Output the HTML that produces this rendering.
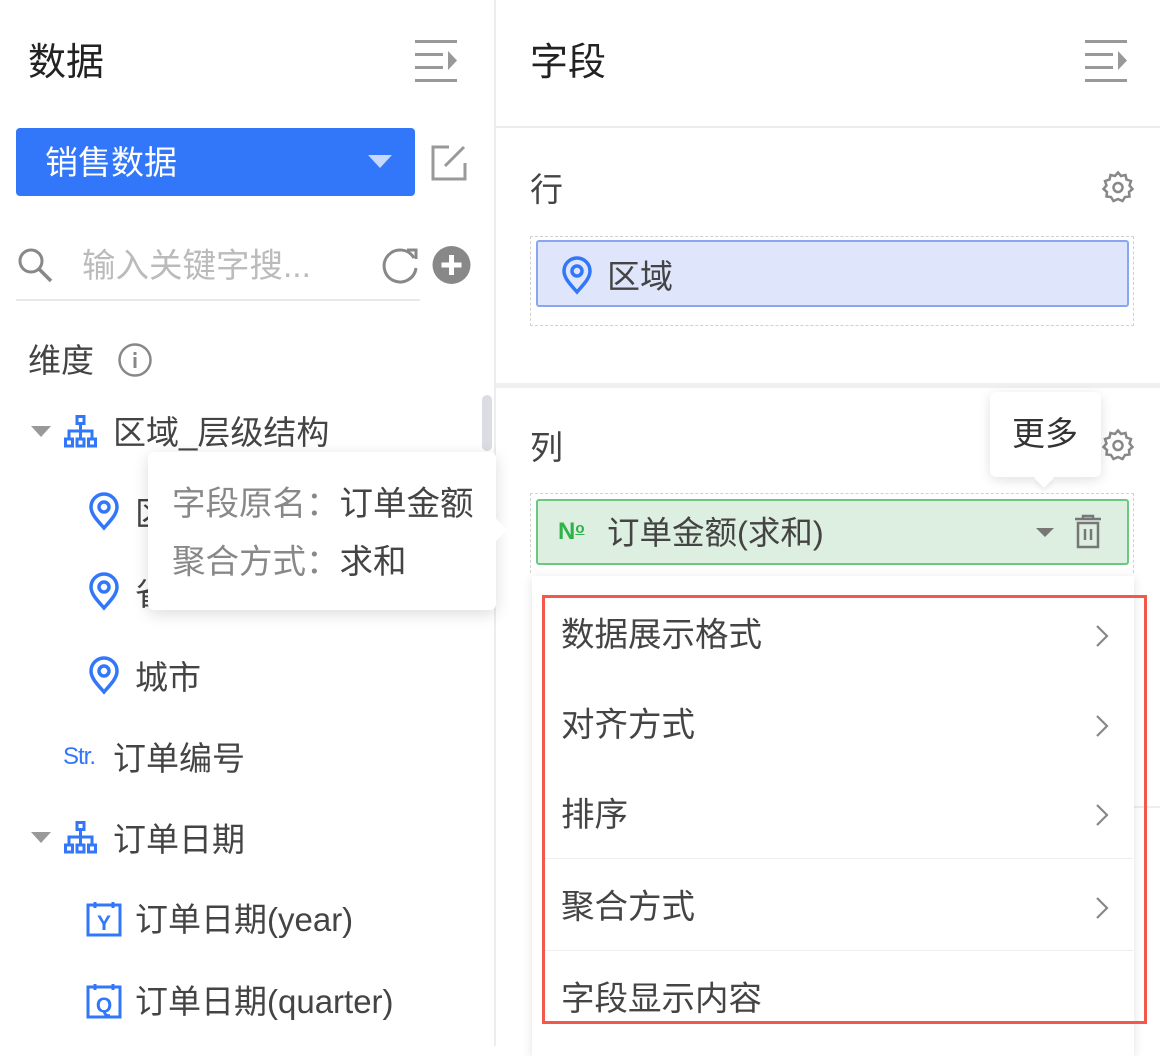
<!DOCTYPE html>
<html><head><meta charset="utf-8">
<style>
*{margin:0;padding:0;box-sizing:border-box}
body{width:1160px;height:1046px;overflow:hidden;background:#fff;position:relative;font-family:"Liberation Sans","Noto Sans CJK SC",sans-serif;color:#333}
.a{position:absolute}
.t{position:absolute;line-height:1;white-space:nowrap}
svg{position:absolute;overflow:visible}
</style></head><body>
<div class="a" style="left:494px;top:0;width:2px;height:1046px;background:#ededed"></div>
<div class="t" style="left:28px;top:44px;font-size:38px;color:#222">数据</div>
<svg style="left:415px;top:40px" width="44" height="44"><g fill="#999"><rect x="0" y="0" width="42" height="3"/><rect x="0" y="13" width="28" height="3"/><rect x="0" y="26" width="28" height="3"/><rect x="0" y="39" width="42" height="3"/><path d="M33 11 L42 20.5 L33 30Z"/></g></svg>
<div class="a" style="left:16px;top:128px;width:399px;height:68px;background:#3277f9;border-radius:4px"></div>
<div class="t" style="left:45px;top:146px;font-size:33px;color:#fff">销售数据</div>
<svg style="left:368px;top:155px" width="24" height="14"><path d="M0 0H24L12 13Z" fill="#c6d8fd"/></svg>
<svg style="left:431px;top:145px" width="36" height="36"><path d="M18 2H2V34H34V18" fill="none" stroke="#999" stroke-width="3"/><path d="M33 2L14 21" stroke="#999" stroke-width="3"/></svg>
<svg style="left:18px;top:248px" width="36" height="36"><circle cx="13" cy="13" r="11" fill="none" stroke="#888" stroke-width="3"/><path d="M21 21L33 33" stroke="#888" stroke-width="3.5"/></svg>
<div class="t" style="left:82px;top:250px;font-size:33.5px;color:#bbb">输入关键字搜...</div>
<div class="a" style="left:16px;top:299px;width:404px;height:2px;background:#e8e8e8"></div>
<svg style="left:382px;top:246px" width="38" height="38"><path d="M32 12A16 16 0 1 0 34 22" fill="none" stroke="#888" stroke-width="3"/><path d="M25 4L34 4L34 13" fill="none" stroke="#888" stroke-width="3"/></svg>
<svg style="left:432px;top:245px" width="40" height="40"><circle cx="19.5" cy="20" r="19" fill="#888"/><path d="M19.5 10V30M9.5 20H29.5" stroke="#fff" stroke-width="5"/></svg>
<div class="t" style="left:28px;top:344px;font-size:33px;color:#444">维度</div>
<svg style="left:118px;top:343px" width="34" height="34"><circle cx="17" cy="17" r="15.5" fill="none" stroke="#888" stroke-width="2.5"/><rect x="15.5" y="9" width="3" height="3" fill="#888"/><rect x="15.5" y="14" width="3" height="11" fill="#888"/></svg>
<div class="a" style="left:482px;top:395px;width:10px;height:56px;background:#dcdde3;border-radius:5px"></div>

<svg style="left:31px;top:426px" width="20" height="12"><path d="M0 0H20L10 11Z" fill="#999"/></svg>
<svg style="left:64px;top:415px" width="34" height="34"><g fill="none" stroke="#3277f9" stroke-width="3"><rect x="13" y="1.5" width="7" height="7"/><rect x="1.5" y="24" width="7" height="7"/><rect x="13" y="24" width="7" height="7"/><rect x="24.5" y="24" width="7" height="7"/><path d="M16.5 9V24M5 24V16H28V24"/></g></svg>
<div class="t" style="left:113px;top:416px;font-size:33px;color:#444">区域_层级结构</div>

<svg style="left:89px;top:494px" width="30" height="36"><path d="M15 34C8 26 2 20 2 13A13 13 0 0 1 28 13C28 20 22 26 15 34Z" fill="none" stroke="#3277f9" stroke-width="3.5"/><circle cx="15" cy="13" r="5" fill="none" stroke="#3277f9" stroke-width="3.5"/></svg>
<div class="t" style="left:135px;top:497px;font-size:33px;color:#444">区域</div>
<svg style="left:89px;top:574px" width="30" height="36"><path d="M15 34C8 26 2 20 2 13A13 13 0 0 1 28 13C28 20 22 26 15 34Z" fill="none" stroke="#3277f9" stroke-width="3.5"/><circle cx="15" cy="13" r="5" fill="none" stroke="#3277f9" stroke-width="3.5"/></svg>
<div class="t" style="left:135px;top:577px;font-size:33px;color:#444">省份</div>
<svg style="left:89px;top:658px" width="30" height="36"><path d="M15 34C8 26 2 20 2 13A13 13 0 0 1 28 13C28 20 22 26 15 34Z" fill="none" stroke="#3277f9" stroke-width="3.5"/><circle cx="15" cy="13" r="5" fill="none" stroke="#3277f9" stroke-width="3.5"/></svg>
<div class="t" style="left:135px;top:661px;font-size:33px;color:#444">城市</div>

<div class="t" style="left:63px;top:745px;font-size:24px;color:#3277f9;letter-spacing:-1px">Str.</div>
<div class="t" style="left:113px;top:742px;font-size:33px;color:#444">订单编号</div>

<svg style="left:31px;top:832px" width="20" height="12"><path d="M0 0H20L10 11Z" fill="#999"/></svg>
<svg style="left:64px;top:821px" width="34" height="34"><g fill="none" stroke="#3277f9" stroke-width="3"><rect x="13" y="1.5" width="7" height="7"/><rect x="1.5" y="24" width="7" height="7"/><rect x="13" y="24" width="7" height="7"/><rect x="24.5" y="24" width="7" height="7"/><path d="M16.5 9V24M5 24V16H28V24"/></g></svg>
<div class="t" style="left:113px;top:823px;font-size:33px;color:#444">订单日期</div>

<svg style="left:86px;top:901px" width="36" height="36"><rect x="2" y="4" width="32" height="30" fill="none" stroke="#3277f9" stroke-width="3"/><path d="M9 1V7M27 1V7" stroke="#3277f9" stroke-width="3"/><text x="18" y="29" text-anchor="middle" font-family="Liberation Sans" font-weight="bold" font-size="21" fill="#3277f9">Y</text></svg>
<div class="t" style="left:135px;top:903px;font-size:33px;color:#444">订单日期(year)</div>
<svg style="left:86px;top:983px" width="36" height="36"><rect x="2" y="4" width="32" height="30" fill="none" stroke="#3277f9" stroke-width="3"/><path d="M9 1V7M27 1V7" stroke="#3277f9" stroke-width="3"/><text x="18" y="29" text-anchor="middle" font-family="Liberation Sans" font-weight="bold" font-size="21" fill="#3277f9">Q</text></svg>
<div class="t" style="left:135px;top:985px;font-size:33px;color:#444">订单日期(quarter)</div>

<div class="a" style="left:148px;top:452px;width:348px;height:158px;background:#fff;border-radius:6px;box-shadow:0 4px 16px rgba(0,0,0,.14)"></div>
<div class="a" style="left:488px;top:522px;width:16px;height:16px;background:#fff;transform:rotate(45deg)"></div>
<div class="t" style="left:172px;top:488px;font-size:33.5px;color:#888">字段原名：<span style="color:#444">订单金额</span></div>
<div class="t" style="left:172px;top:546px;font-size:33.5px;color:#888">聚合方式：<span style="color:#444">求和</span></div>

<div class="t" style="left:530px;top:44px;font-size:38px;color:#222">字段</div>
<svg style="left:1085px;top:40px" width="44" height="44"><g fill="#999"><rect x="0" y="0" width="42" height="3"/><rect x="0" y="13" width="28" height="3"/><rect x="0" y="26" width="28" height="3"/><rect x="0" y="39" width="42" height="3"/><path d="M33 11 L42 20.5 L33 30Z"/></g></svg>
<div class="a" style="left:496px;top:126px;width:664px;height:2px;background:#ececec"></div>
<div class="t" style="left:530px;top:173px;font-size:33px;color:#444">行</div>
<svg style="left:1102px;top:171px" width="32" height="32"><g fill="none" stroke="#888" stroke-width="2.5"><path d="M16 1.5L19 5L23.5 4L24.5 8.5L29 10L27.5 14.5L30.5 18L27 21L27.5 25.5L23 26L20.5 30L16 28L11.5 30L9 26L4.5 25.5L5 21L1.5 18L4.5 14.5L3 10L7.5 8.5L8.5 4L13 5Z"/><circle cx="16" cy="16.5" r="4.5"/></g></svg>
<div class="a" style="left:530px;top:236px;width:604px;height:90px;border:1px dashed #d0d0d0"></div>
<div class="a" style="left:536px;top:240px;width:593px;height:67px;background:#dfe6fb;border:2px solid #8aa6f3;border-radius:3px"></div>
<svg style="left:562px;top:258px" width="30" height="36"><path d="M15 34C8 26 2 20 2 13A13 13 0 0 1 28 13C28 20 22 26 15 34Z" fill="none" stroke="#3277f9" stroke-width="3.5"/><circle cx="15" cy="13" r="5" fill="none" stroke="#3277f9" stroke-width="3.5"/></svg>
<div class="t" style="left:607px;top:260px;font-size:33px;color:#444">区域</div>
<div class="a" style="left:496px;top:383px;width:664px;height:5px;background:#f0f0f0"></div>

<div class="t" style="left:530px;top:431px;font-size:33px;color:#444">列</div>
<svg style="left:1102px;top:429px" width="32" height="32"><g fill="none" stroke="#888" stroke-width="2.5"><path d="M16 1.5L19 5L23.5 4L24.5 8.5L29 10L27.5 14.5L30.5 18L27 21L27.5 25.5L23 26L20.5 30L16 28L11.5 30L9 26L4.5 25.5L5 21L1.5 18L4.5 14.5L3 10L7.5 8.5L8.5 4L13 5Z"/><circle cx="16" cy="16.5" r="4.5"/></g></svg>
<div class="a" style="left:530px;top:493px;width:604px;height:80px;border:1px dashed #d0d0d0;border-bottom:none"></div>
<div class="a" style="left:536px;top:499px;width:593px;height:66px;background:#dcefe0;border:2px solid #6cc87e;border-radius:3px"></div>
<div class="t" style="left:558px;top:520px;font-size:24px;color:#2fb24a;font-weight:bold">N<span style="font-size:15px;text-decoration:underline;vertical-align:6px">o</span></div>
<div class="t" style="left:607px;top:517px;font-size:32.5px;color:#444">订单金额(求和)</div>
<svg style="left:1036px;top:528px" width="18" height="10"><path d="M0 0H18L9 9Z" fill="#777"/></svg>
<svg style="left:1075px;top:515px" width="26" height="34"><g fill="none" stroke="#777" stroke-width="2.5"><path d="M0 4H26M8 4V1H18V4"/><rect x="3" y="8" width="20" height="24"/><path d="M10 14V25M16 14V25"/></g></svg>

<div class="a" style="left:990px;top:392px;width:111px;height:85px;background:#fff;border-radius:6px;box-shadow:0 3px 12px rgba(0,0,0,.12)"></div>
<div class="a" style="left:1037px;top:471px;width:14px;height:14px;background:#fff;transform:rotate(45deg);box-shadow:3px 3px 5px rgba(0,0,0,.06)"></div>
<div class="t" style="left:1012px;top:417px;font-size:33px;color:#333">更多</div>

<div class="a" style="left:1134px;top:806px;width:26px;height:2px;background:#eee"></div>

<div class="a" style="left:532px;top:576px;width:602px;height:480px;background:#fff;box-shadow:0 2px 10px rgba(0,0,0,.12)"></div>
<div class="a" style="left:545px;top:858px;width:588px;height:1px;background:#eee"></div>
<div class="a" style="left:545px;top:950px;width:588px;height:1px;background:#eee"></div>
<div class="t" style="left:561px;top:619px;font-size:33.5px;color:#444">数据展示格式</div>
<div class="t" style="left:561px;top:709px;font-size:33.5px;color:#444">对齐方式</div>
<div class="t" style="left:561px;top:799px;font-size:33.5px;color:#444">排序</div>
<div class="t" style="left:561px;top:891px;font-size:33.5px;color:#444">聚合方式</div>
<div class="t" style="left:561px;top:983px;font-size:33.5px;color:#444">字段显示内容</div>
<svg style="left:1095px;top:624px" width="14" height="24"><path d="M2 2L12 12L2 22" fill="none" stroke="#888" stroke-width="2.2"/></svg>
<svg style="left:1095px;top:714px" width="14" height="24"><path d="M2 2L12 12L2 22" fill="none" stroke="#888" stroke-width="2.2"/></svg>
<svg style="left:1095px;top:803px" width="14" height="24"><path d="M2 2L12 12L2 22" fill="none" stroke="#888" stroke-width="2.2"/></svg>
<svg style="left:1095px;top:896px" width="14" height="24"><path d="M2 2L12 12L2 22" fill="none" stroke="#888" stroke-width="2.2"/></svg>
<div class="a" style="left:542px;top:595px;width:605px;height:429px;border:3px solid #f2584b"></div>
</body></html>
